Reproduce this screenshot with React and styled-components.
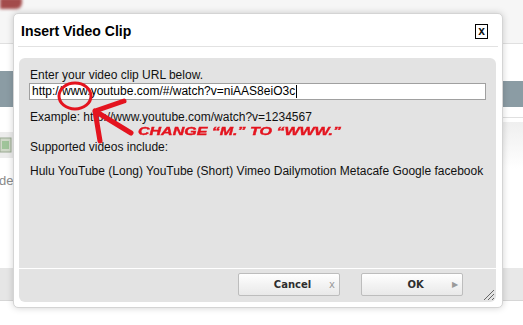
import React from "react";
import styled, { createGlobalStyle } from "styled-components";

const Global = createGlobalStyle`
  html, body { margin: 0; padding: 0; background: #ffffff; }
  body { font-family: "Liberation Sans", Arial, sans-serif; }
`;

const Root = styled.div`
  position: relative;
  width: 523px;
  height: 325px;
  overflow: hidden;
  background: #ffffff;
`;

/* ---------- page behind the modal ---------- */
const Backdrop = styled.div`
  display: flex;
  flex-direction: column;
  height: 100%;
`;

const TopBar = styled.div`
  height: 43px;
  background: #f6f6f6;
  border-bottom: 1px solid #e0e0e0;
  display: flex;
  align-items: flex-start;
`;

const Avatar = styled.div`
  width: 22px;
  height: 11px;
  margin-top: -2px;
  background: #a34b4b;
  filter: blur(1.5px);
  border-radius: 0 0 6px 0;
`;

const Columns = styled.div`
  flex: 1;
  display: flex;
  justify-content: space-between;
`;

const SideCol = styled.div`
  width: ${(p) => p.$w}px;
  display: flex;
  flex-direction: column;
`;

const Band = styled.div`
  height: ${(p) => p.$h}px;
  background: ${(p) => p.$bg || "#ffffff"};
  ${(p) => (p.$line ? `border-bottom: 1px solid ${p.$line};` : "")}
  overflow: hidden;
  display: flex;
  align-items: center;
`;

const FillBand = styled.div`
  flex: 1;
  background: #ffffff;
`;

const SideText = styled.span`
  font-size: 13px;
  color: #8a8a8a;
  margin-left: -1px;
`;

/* ---------- dialog ---------- */
const Dialog = styled.div`
  position: absolute;
  left: 13px;
  top: 13px;
  width: 488px;
  height: 293px;
  background: #ffffff;
  border: 1px solid #d4d4d4;
  border-radius: 5px;
  box-shadow: 0 0 7px rgba(0, 0, 0, 0.18);
  display: flex;
  flex-direction: column;
`;

const Header = styled.div`
  height: 32px;
  margin: 0 4px;
  padding: 0 10px 0 3px;
  border-bottom: 1px solid #e2e2e2;
  display: flex;
  align-items: center;
  justify-content: space-between;
`;

const Title = styled.h1`
  margin: 0;
  font-size: 14px;
  font-weight: bold;
  color: #000;
  padding-top: 1px;
`;

const CloseBox = styled.div`
  width: 11px;
  height: 12px;
  border: 1px solid #000;
  display: flex;
  align-items: center;
  justify-content: center;
  font-size: 12px;
  font-weight: bold;
  line-height: 1;
  color: #111;
  padding-bottom: 1px;
  box-sizing: content-box;
  margin-top: 2px;
`;

const Panel = styled.div`
  flex: 1;
  margin: 11px 6px 5px 5px;
  background: #e3e3e3;
  border-radius: 6px;
  display: flex;
  flex-direction: column;
`;

const PanelBody = styled.div`
  flex: 1;
  padding: 10px 10px 0 10px;
  font-size: 12px;
  color: #111;
  line-height: 14px;
  border-bottom: 1px solid #ffffff;
`;

const Line = styled.div`
  margin-top: ${(p) => p.$mt || 0}px;
  padding-left: 1px;
`;

const UrlField = styled.div`
  margin-top: 1px;
  height: 15px;
  border: 1px solid #a0a0a0;
  background: #ffffff;
  padding-left: 2px;
  font-size: 12px;
  line-height: 15px;
  display: flex;
  align-items: center;
  color: #000;
`;

const Caret = styled.span`
  display: inline-block;
  width: 1px;
  height: 13px;
  background: #000;
  margin-left: 1px;
`;

const Footer = styled.div`
  height: 33px;
  display: flex;
  align-items: flex-start;
  justify-content: flex-end;
  gap: 21px;
  padding: 4px 33px 0 0;
  box-sizing: border-box;
  position: relative;
`;

const Button = styled.button`
  width: 102px;
  height: 23px;
  border: 1px solid #bdbdbd;
  border-radius: 2px;
  background: linear-gradient(#ffffff, #f3f3f3 50%, #e9e9e9);
  display: grid;
  grid-template-columns: 1fr 14px;
  align-items: center;
  padding: 0 0 0 21px;
  font-family: "DejaVu Sans", Verdana, sans-serif;
  font-size: 10px;
  font-weight: bold;
  color: #2e2e2e;
  cursor: pointer;
`;

const ButtonLabel = styled.span`
  text-align: center;
`;

const ButtonIcon = styled.span`
  display: flex;
  justify-content: center;
  color: #9a9a9a;
  font-weight: normal;
  font-size: ${(p) => p.$size || 10}px;
`;

const Grip = styled.svg`
  position: absolute;
  right: 1px;
  bottom: 1px;
`;

/* ---------- annotation overlay ---------- */
const Overlay = styled.svg`
  position: absolute;
  left: 0;
  top: 0;
  pointer-events: none;
`;

const Note = styled.div`
  position: absolute;
  left: 138px;
  top: 126px;
  font-family: "Liberation Sans", Arial, sans-serif;
  font-style: italic;
  font-weight: bold;
  font-size: 10px;
  color: #e4141f;
  -webkit-text-stroke: 0.35px #e4141f;
  white-space: nowrap;
  transform: scaleX(1.6);
  transform-origin: left top;
  pointer-events: none;
`;

function FilmIcon() {
  return (
    <svg width="12" height="16" viewBox="0 0 12 16">
      <rect x="0" y="1" width="11" height="14" fill="#cfd8c8" stroke="#9aaa92" strokeWidth="1" />
      <rect x="2" y="4" width="7" height="8" fill="#9fc49a" />
    </svg>
  );
}

export default function App() {
  return (
    <>
      <Global />
      <Root>
        <Backdrop>
          <TopBar>
            <Avatar />
          </TopBar>
          <Columns>
            <SideCol $w={13}>
              <Band $h={27} />
              <Band $h={36} $bg="#8b9ca4" />
              <Band $h={25} />
              <Band $h={26} $bg="#ececec">
                <FilmIcon />
              </Band>
              <Band $h={44}>
                <SideText>de</SideText>
              </Band>
              <FillBand />
              <Band $h={32} $bg="#e6e6e6" $line="#d6d6d6" />
              <Band $h={24} />
            </SideCol>
            <SideCol $w={20}>
              <Band $h={37} />
              <Band $h={26} $bg="#8b9ca4" />
              <Band $h={10} $line="#e0e0e0" />
              <Band $h={4} />
              <Band $h={47} $bg="linear-gradient(#efefef, #ffffff)" />
              <FillBand />
              <Band $h={32} $bg="#e8e8e8" $line="#d6d6d6" />
              <Band $h={24} />
            </SideCol>
          </Columns>
        </Backdrop>

        <Dialog>
          <Header>
            <Title>Insert Video Clip</Title>
            <CloseBox>x</CloseBox>
          </Header>
          <Panel>
            <PanelBody>
              <Line>Enter your video clip URL below.</Line>
              <UrlField>
                http://www.youtube.com/#/watch?v=niAAS8eiO3c
                <Caret />
              </UrlField>
              <Line $mt={10}>Example: http://www.youtube.com/watch?v=1234567</Line>
              <Line $mt={16}>Supported videos include:</Line>
              <Line $mt={10}>
                Hulu YouTube (Long) YouTube (Short) Vimeo Dailymotion Metacafe Google facebook
              </Line>
            </PanelBody>
            <Footer>
              <Button>
                <ButtonLabel>Cancel</ButtonLabel>
                <ButtonIcon $size={10}>x</ButtonIcon>
              </Button>
              <Button>
                <ButtonLabel>OK</ButtonLabel>
                <ButtonIcon $size={8}>▶</ButtonIcon>
              </Button>
              <Grip width="12" height="12" viewBox="0 0 12 12">
                <path d="M11 1 L1 11 M11 5 L5 11 M11 9 L9 11" stroke="#666" strokeWidth="1" />
              </Grip>
            </Footer>
          </Panel>
        </Dialog>

        <Overlay width="523" height="325" viewBox="0 0 523 325">
          <ellipse cx="75" cy="96" rx="16" ry="13" fill="none" stroke="#e4141f" strokeWidth="3" />
          <path
            d="M95 111 L124 101 M95 111 L100 141 M95 111 L131 133"
            stroke="#e4141f"
            strokeWidth="5"
            strokeLinecap="round"
            fill="none"
          />
        </Overlay>
        <Note>CHANGE “M.” TO “WWW.”</Note>
      </Root>
    </>
  );
}
